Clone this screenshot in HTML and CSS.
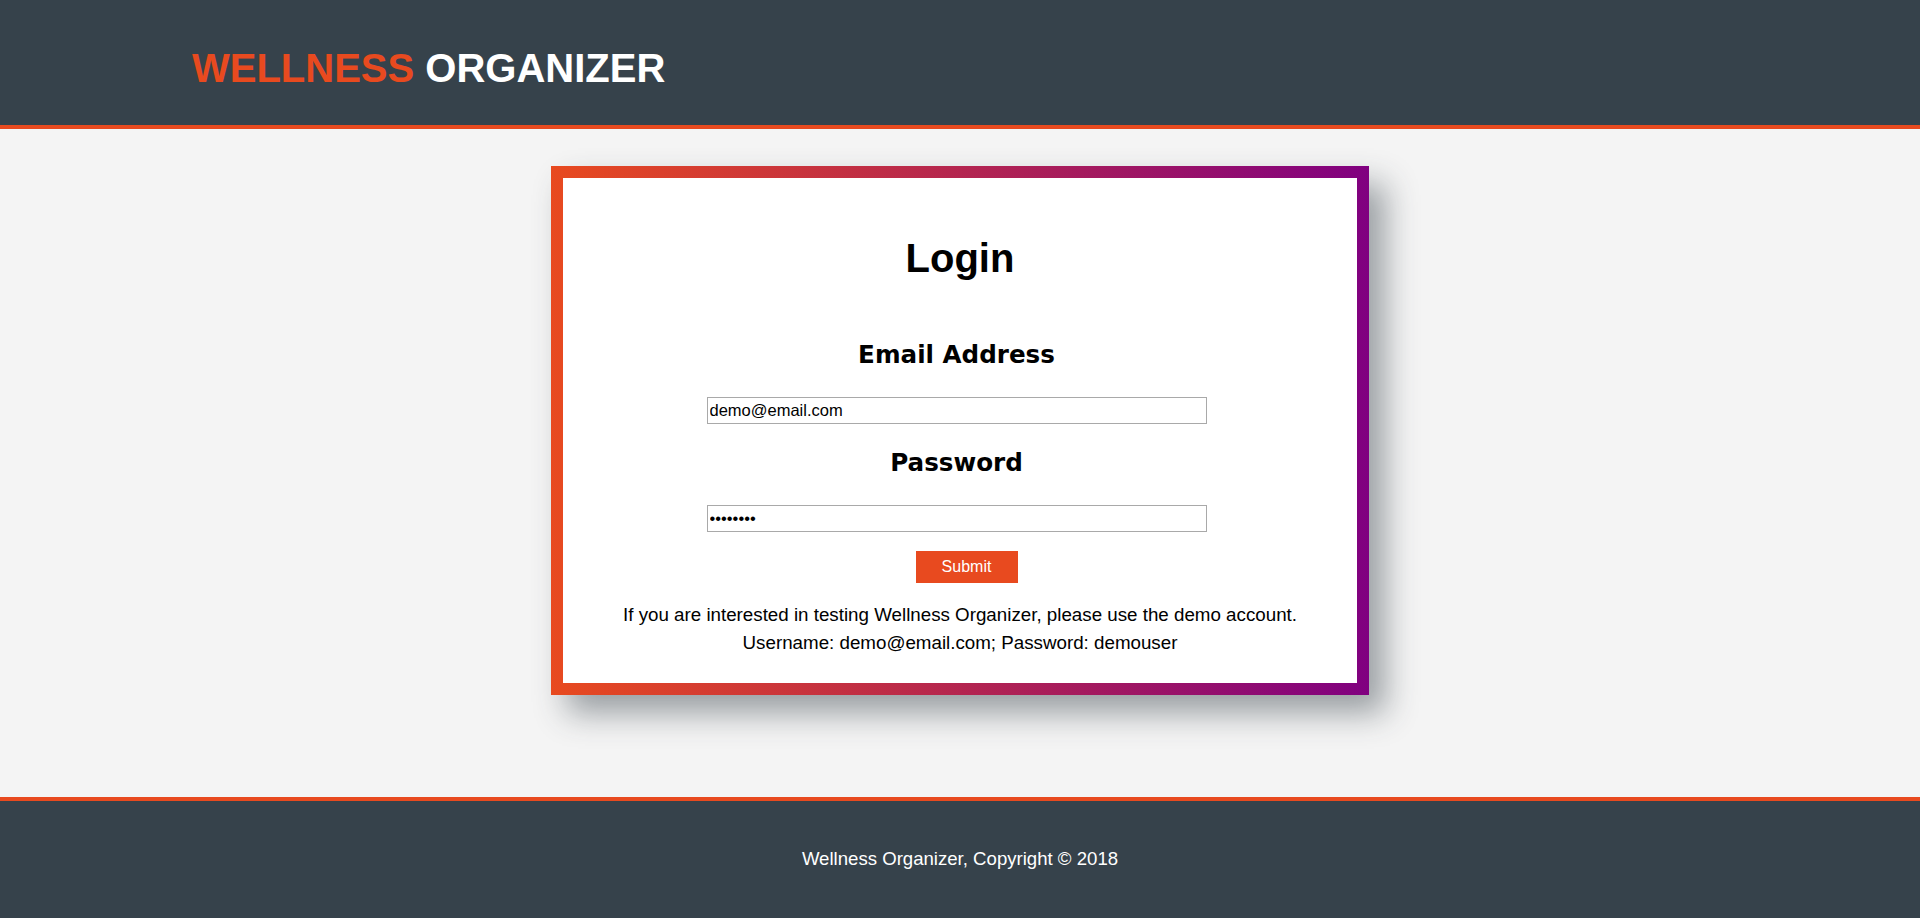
FILE: index.html
```html
<!DOCTYPE html>
<html lang="en">
<head>
<meta charset="utf-8">
<title>Wellness Organizer - Login</title>
<link rel="stylesheet" href="styles.css">
</head>
<body>
<header class="site-header">
  <h1 class="brand"><span class="brand-accent">WELLNESS</span> ORGANIZER</h1>
</header>
<main class="main">
  <section class="card">
    <h2 class="card-title">Login</h2>
    <form class="login-form">
      <h3 class="field-label">Email Address</h3>
      <input class="field-input" type="email" value="demo@email.com">
      <h3 class="field-label">Password</h3>
      <input class="field-input" type="password" value="demouser">
      <button class="submit-btn" type="button">Submit</button>
    </form>
    <p class="demo-note">If you are interested in testing Wellness Organizer, please use the demo account.<br>Username: demo@email.com; Password: demouser</p>
  </section>
</main>
<footer class="site-footer">
  <p class="footer-text">Wellness Organizer, Copyright © 2018</p>
</footer>
</body>
</html>
```

FILE: styles.css
```css
html, body {
  margin: 0;
  padding: 0;
}

body {
  min-height: 100vh;
  display: flex;
  flex-direction: column;
  background: #f4f4f4;
  font-family: "Liberation Sans", Arial, sans-serif;
  color: #000;
}

.site-header {
  background: #36424b;
  border-bottom: 4px solid #e84a1f;
  padding: 45px 0 0 192px;
  height: 80px;
}

.brand {
  margin: 0;
  font-size: 40px;
  font-weight: bold;
  color: #fff;
  line-height: 46px;
}

.brand-accent {
  color: #e84a1f;
}

.main {
  flex: 1;
  display: flex;
  justify-content: center;
  align-items: flex-start;
  padding-top: 37px;
}

.card {
  width: 818px;
  box-sizing: border-box;
  border: 12px solid transparent;
  background:
    linear-gradient(#fff, #fff) padding-box,
    linear-gradient(to right, #e84a1f, #800080) border-box;
  box-shadow: 16px 18px 30px rgba(45, 55, 65, 0.45);
  padding: 57px 20px 26px;
  text-align: center;
}

.card-title {
  margin: 0;
  font-size: 40px;
  line-height: 46px;
  font-weight: bold;
}

.login-form {
  display: flex;
  flex-direction: column;
  align-items: center;
  padding-right: 7px;
}

.field-label {
  margin: 25px 0 0;
  font-family: "DejaVu Sans", Verdana, sans-serif;
  font-size: 24.6px;
  line-height: 28px;
  font-weight: bold;
}

.login-form .field-label:first-child {
  margin-top: 60px;
}

.field-input {
  margin-top: 28px;
  width: 500px;
  height: 27px;
  box-sizing: border-box;
  border: 1px solid #a9a9a9;
  padding: 1px 2px;
  font-family: "Liberation Sans", Arial, sans-serif;
  font-size: 16.5px;
  color: #000;
  background: #fff;
  outline: none;
}

.submit-btn {
  margin: 19px 0 0 20px;
  width: 102px;
  height: 32px;
  border: none;
  background: #e84a1f;
  color: #fff;
  font-family: "Liberation Sans", Arial, sans-serif;
  font-size: 16px;
  padding: 0;
}

.demo-note {
  margin: 18px 0 0;
  font-size: 18.75px;
  line-height: 28px;
}

.site-footer {
  background: #36424b;
  border-top: 4px solid #e84a1f;
  height: 117px;
  display: flex;
  align-items: center;
  justify-content: center;
}

.footer-text {
  margin: 0 0 2px;
  color: #fff;
  font-size: 18.6px;
}
```
